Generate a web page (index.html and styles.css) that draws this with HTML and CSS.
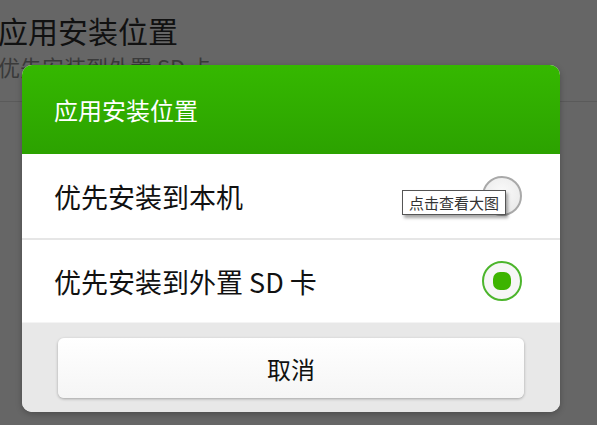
FILE: index.html
```html
<!DOCTYPE html>
<html lang="zh">
<head>
<meta charset="utf-8">
<title>应用安装位置</title>
<link rel="stylesheet" href="styles.css">
</head>
<body>
<div class="page">
  <div class="setting">
    <div class="setting-title">应用安装位置</div>
    <div class="setting-sub">优先安装到外置 SD 卡</div>
  </div>
</div>

<div class="dialog">
  <div class="dialog-header">应用安装位置</div>
  <div class="option">
    <span class="option-label">优先安装到本机</span>
    <span class="radio"></span>
    <span class="tooltip">点击查看大图</span>
  </div>
  <div class="option option-last">
    <span class="option-label">优先安装到外置 SD 卡</span>
    <span class="radio radio-on"><span class="radio-dot"></span></span>
  </div>
  <div class="dialog-footer">
    <div class="btn">取消</div>
  </div>
</div>
</body>
</html>
```

FILE: styles.css
```css
html, body {
  margin: 0;
  padding: 0;
}
body {
  width: 597px;
  height: 425px;
  overflow: hidden;
  background: #666666;
  font-family: "Noto Sans CJK SC", "Noto Sans", sans-serif;
  position: relative;
}
.page {
  padding-top: 10px;
}
.setting {
  border-bottom: 1px solid #5a5a5a;
  height: 91px;
}
.setting-title {
  font-size: 30px;
  line-height: 40px;
  color: #111111;
  margin-left: -2px;
}
.setting-sub {
  font-size: 22px;
  line-height: 32px;
  color: #3a3a3a;
  margin-left: -2px;
}
.dialog {
  position: absolute;
  left: 22px;
  top: 65px;
  width: 538px;
  border-radius: 10px;
  overflow: hidden;
  background: #ffffff;
  box-shadow: 0 2px 6px rgba(0,0,0,0.25);
}
.dialog-header {
  height: 89px;
  box-sizing: border-box;
  background: linear-gradient(#35b800, #2ca200);
  color: #ffffff;
  font-size: 24px;
  line-height: 89px;
  padding-left: 32px;
}
.option {
  position: relative;
  height: 84px;
  display: flex;
  align-items: center;
  justify-content: space-between;
  padding: 0 38px 0 32px;
  border-bottom: 2px solid #e6e6e6;
}
.option-last {
  height: 82px;
  border-bottom: 1px solid #f4f4f4;
}
.option-label {
  font-size: 27px;
  color: #111111;
}
.radio {
  width: 36px;
  height: 36px;
  border-radius: 50%;
  border: 2px solid #a9a9a9;
  background: radial-gradient(circle at 50% 40%, #fafafa, #e6e6e6);
  display: flex;
  align-items: center;
  justify-content: center;
}
.radio-on {
  border: 2px solid #4cb52c;
  background: #f6f6f6;
}
.radio-dot {
  width: 18px;
  height: 18px;
  border-radius: 7px;
  background: #3db400;
}
.tooltip {
  position: absolute;
  left: 380px;
  top: 36px;
  height: 25px;
  line-height: 23px;
  box-sizing: border-box;
  padding: 0 6px;
  background: #ffffff;
  border: 1px solid #555555;
  color: #333333;
  font-size: 15px;
  box-shadow: 2px 3px 3px rgba(0,0,0,0.35);
}
.dialog-footer {
  background: #e8e8e8;
  padding: 15px 36px 14px 36px;
}
.btn {
  height: 60px;
  border-radius: 6px;
  background: linear-gradient(#ffffff, #f5f5f5);
  box-shadow: 0 1px 3px rgba(0,0,0,0.3);
  display: flex;
  align-items: center;
  justify-content: center;
  font-size: 24px;
  color: #111111;
}
```
